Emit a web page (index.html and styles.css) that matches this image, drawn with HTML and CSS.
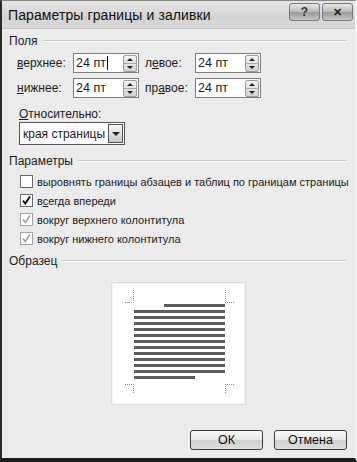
FILE: index.html
```html
<!DOCTYPE html>
<html lang="ru">
<head>
<meta charset="UTF-8">
<title>Параметры границы и заливки</title>
<link rel="stylesheet" href="styles.css">
</head>
<body>
<div class="window">
  <div class="titlebar">
    <span class="title">Параметры границы и заливки</span>
    <div class="title-buttons">
      <span class="tbtn">?</span>
      <span class="tbtn tbtn-close">&#x2715;</span>
    </div>
  </div>

  <div class="content">
    <div class="group-head"><span>Поля</span><div class="group-line"></div></div>

    <div class="margins">
      <div class="mrow">
        <span class="mlabel"><u>в</u>ерхнее:</span>
        <div class="spin"><span class="spin-val">24 пт<i class="caret"></i></span><span class="spin-btns"><b class="up"></b><b class="down"></b></span></div>
        <span class="mlabel mlabel2">л<u>е</u>вое:</span>
        <div class="spin"><span class="spin-val">24 пт</span><span class="spin-btns"><b class="up"></b><b class="down"></b></span></div>
      </div>
      <div class="mrow">
        <span class="mlabel"><u>н</u>ижнее:</span>
        <div class="spin"><span class="spin-val">24 пт</span><span class="spin-btns"><b class="up"></b><b class="down"></b></span></div>
        <span class="mlabel mlabel2">пр<u>а</u>вое:</span>
        <div class="spin"><span class="spin-val">24 пт</span><span class="spin-btns"><b class="up"></b><b class="down"></b></span></div>
      </div>
    </div>

    <div class="rel-label"><u>О</u>тносительно:</div>
    <div class="select">
      <span class="select-val">края страницы</span>
      <span class="select-btn"><b class="down"></b></span>
    </div>

    <div class="group-head group-params"><span>Параметры</span><div class="group-line"></div></div>

    <div class="checks">
      <div class="check"><span class="box"></span><span>выровнять границы абзацев и таблиц по границам страницы</span></div>
      <div class="check"><span class="box"><svg width="11" height="11" viewBox="0 0 11 11"><path d="M2 5.5 L4.3 8.5 L9 1.5" fill="none" stroke="#111" stroke-width="2"/></svg></span><span>в<u>с</u>егда впереди</span></div>
      <div class="check check-off"><span class="box"><svg width="11" height="11" viewBox="0 0 11 11"><path d="M2 5.5 L4.3 8.5 L9 1.5" fill="none" stroke="#999" stroke-width="1.4"/></svg></span><span>вокруг верхнего колонтитула</span></div>
      <div class="check check-off"><span class="box"><svg width="11" height="11" viewBox="0 0 11 11"><path d="M2 5.5 L4.3 8.5 L9 1.5" fill="none" stroke="#999" stroke-width="1.4"/></svg></span><span>вокруг нижнего колонтитула</span></div>
    </div>

    <div class="group-head group-sample"><span>Образец</span><div class="group-line"></div></div>

    <div class="preview">
      <svg width="131" height="119" viewBox="0 0 131 119">
        <g fill="none" stroke="#888" stroke-width="1" stroke-dasharray="1 1">
          <path d="M12 18.5 H20.5 V6"/>
          <path d="M121 18.5 H112.5 V6"/>
          <path d="M12 100.5 H20.5 V109"/>
          <path d="M121 100.5 H112.5 V109"/>
        </g>
        <g fill="#5c5c5c">
          <rect x="51" y="20" width="61" height="3"/>
          <rect x="21" y="26" width="91" height="3"/>
          <rect x="21" y="32" width="91" height="3"/>
          <rect x="21" y="38" width="91" height="3"/>
          <rect x="21" y="44" width="91" height="3"/>
          <rect x="21" y="50" width="91" height="3"/>
          <rect x="21" y="56" width="91" height="3"/>
          <rect x="21" y="62" width="91" height="3"/>
          <rect x="21" y="68" width="91" height="3"/>
          <rect x="21" y="74" width="91" height="3"/>
          <rect x="21" y="80" width="91" height="3"/>
          <rect x="21" y="86" width="91" height="3"/>
          <rect x="21" y="92" width="61" height="3"/>
        </g>
      </svg>
    </div>

    <div class="actions">
      <button class="btn">ОК</button>
      <button class="btn">Отмена</button>
    </div>
  </div>
</div>
</body>
</html>
```

FILE: styles.css
```css
body {
  margin: 0;
  background: #ebebeb;
  font-family: 'Liberation Sans', Arial, sans-serif;
  font-size: 12px;
  color: #1a1a1a;
}

u {
  text-decoration: underline;
  text-underline-offset: 1px;
}

.window {
  width: 357px;
  height: 462px;
  box-sizing: border-box;
  border-left: 2px solid #2a2a2a;
  border-bottom: 4px solid #1c1c1c;
  border-right: 2px solid #f4f4f4;
  border-top: 1px solid #8a8a8a;
  background: #ebebeb;
  display: flex;
  flex-direction: column;
}

.titlebar {
  height: 27px;
  display: flex;
  align-items: center;
  justify-content: space-between;
  padding: 0 2px 0 6px;
  background: linear-gradient(to bottom, #e6e6e6, #d3d3d3 60%, #d9d9d9);
  border-bottom: 1px solid #c4c4c4;
}

.title {
  font-size: 14px;
  color: #111;
  letter-spacing: 0.1px;
}

.title-buttons {
  display: flex;
  gap: 2px;
  margin-top: -6px;
}

.tbtn {
  width: 29px;
  height: 16px;
  border: 1px solid #7a7a7a;
  border-radius: 3px;
  background: linear-gradient(to bottom, #e8e8e8, #b8b8b8 50%, #9a9a9a 51%, #c4c4c4);
  color: #333;
  font-weight: bold;
  font-size: 12px;
  line-height: 16px;
  text-align: center;
}

.tbtn-close {
  color: #222;
  font-size: 11px;
}

.content {
  flex: 1;
  padding: 5px 7px 0 7px;
  display: flex;
  flex-direction: column;
}

.group-head {
  display: flex;
  align-items: center;
  height: 14px;
}

.group-line {
  flex: 1;
  margin-left: 5px;
  border-top: 1px solid #c8c8c8;
  border-bottom: 1px solid #fafafa;
  margin-right: 2px;
}

.margins {
  margin-top: 5px;
  padding-left: 8px;
  display: flex;
  flex-direction: column;
  gap: 5px;
}

.mrow {
  display: flex;
  align-items: center;
  height: 20px;
}

.mlabel {
  width: 56px;
}

.mlabel2 {
  width: 50px;
  margin-left: 6px;
}

.spin {
  width: 62px;
  height: 18px;
  border: 1px solid #7d7d7d;
  background: #fff;
  display: flex;
  align-items: center;
  justify-content: space-between;
  padding-left: 2px;
}

.spin-val {
  display: flex;
  align-items: center;
  font-size: 12.5px;
}

.caret {
  display: inline-block;
  width: 1px;
  height: 14px;
  background: #111;
  margin-left: 1px;
}

.spin-btns {
  width: 14px;
  height: 17px;
  margin-right: 1px;
  display: flex;
  flex-direction: column;
  border: 1px solid #9a9a9a;
  border-radius: 2px;
  background: linear-gradient(to bottom, #f4f4f4, #d2d2d2);
  box-sizing: border-box;
}

.spin-btns b {
  flex: 1;
  display: flex;
  align-items: center;
  justify-content: center;
}

.spin-btns .up {
  border-bottom: 1px solid #a8a8a8;
}

.up::before {
  content: "";
  border-left: 3px solid transparent;
  border-right: 3px solid transparent;
  border-bottom: 3px solid #222;
}

.down::before {
  content: "";
  border-left: 3px solid transparent;
  border-right: 3px solid transparent;
  border-top: 3px solid #222;
}

.rel-label {
  margin-top: 9px;
  padding-left: 10px;
  height: 14px;
  line-height: 14px;
}

.select {
  margin-top: 1px;
  margin-left: 10px;
  width: 101px;
  height: 21px;
  border: 1px solid #555;
  background: #fff;
  display: flex;
  align-items: center;
  justify-content: space-between;
  padding-left: 3px;
  white-space: nowrap;
}

.select-btn {
  flex: none;
  width: 15px;
  height: 19px;
  margin-right: 1px;
  border: 1px solid #555;
  box-sizing: border-box;
  background: linear-gradient(to bottom, #f8f8f8, #c8c8c8);
  display: flex;
  align-items: center;
  justify-content: center;
}

.select-btn .down::before {
  display: block;
  border-left-width: 4px;
  border-right-width: 4px;
  border-top-width: 4px;
}

.group-params {
  margin-top: 9px;
}

.checks {
  margin-top: 4px;
  padding-left: 11px;
  display: flex;
  flex-direction: column;
}

.check {
  display: flex;
  align-items: center;
  height: 19px;
  gap: 4px;
  font-size: 11px;
  white-space: nowrap;
}

.box {
  flex: none;
  width: 11px;
  height: 11px;
  border: 1px solid #6a6a6a;
  background: #fff;
  display: flex;
}

.check-off .box {
  border-color: #a0a0a0;
}

.group-sample {
  margin-top: 6px;
}

.preview {
  align-self: center;
  margin-top: 15px;
  width: 131px;
  height: 119px;
  background: #fff;
  border: 1px solid #f4f4f4;
  box-shadow: 0 0 0 1px #dcdcdc;
  display: flex;
}

.actions {
  display: flex;
  justify-content: flex-end;
  gap: 11px;
  margin-top: 26px;
  padding-right: 1px;
}

.btn {
  width: 73px;
  height: 20px;
  border: 1px solid #3c3c3c;
  border-radius: 3px;
  background: linear-gradient(to bottom, #fafafa, #e6e6e6 50%, #d0d0d0 51%, #dcdcdc);
  font-family: 'Liberation Sans', Arial, sans-serif;
  font-size: 12.5px;
  color: #111;
  padding: 0;
}
```
